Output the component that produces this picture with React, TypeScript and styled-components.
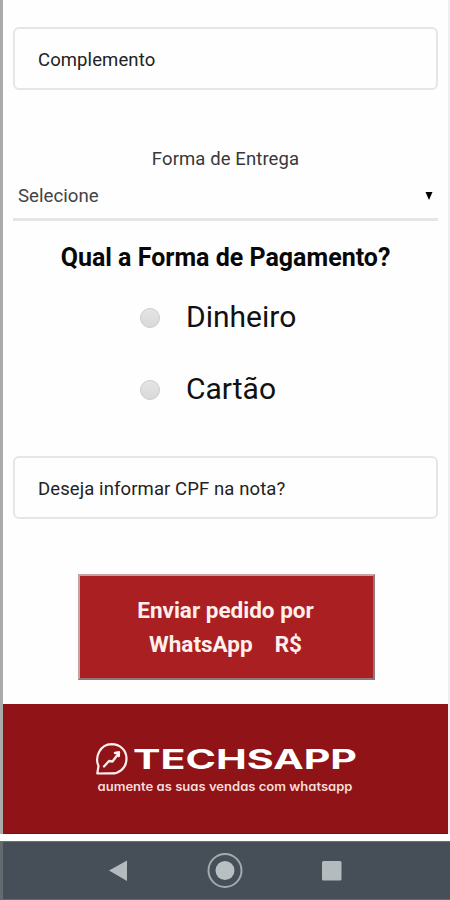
import React from "react";
import styled, { createGlobalStyle } from "styled-components";

const GlobalStyle = createGlobalStyle`
  * { box-sizing: border-box; }
  body { margin: 0; background: #fefefe; font-family: Roboto, "Liberation Sans", sans-serif; }
`;

const Screen = styled.div`
  width: 450px;
  height: 900px;
  display: flex;
  flex-direction: column;
  overflow: hidden;
`;

const Page = styled.main`
  height: 834px;
  display: flex;
  flex-direction: column;
  border-left: 3px solid #aaa;
  border-right: 2px solid #f0f0f0;
  background: #fefefe;
`;

const Form = styled.form`
  height: 704px;
  padding: 27px 10px 0;
  display: flex;
  flex-direction: column;
`;

const Field = styled.input`
  width: 425px;
  height: 63px;
  flex: none;
  padding: 2px 23px 0;
  border: 2px solid #e6e6e6;
  border-radius: 6px;
  background: #fefefe;
  font: 18.5px Roboto, sans-serif;
  letter-spacing: 0.1px;
  outline: none;
  &::placeholder { color: #222; opacity: 1; }
`;

const Label = styled.label`
  margin-top: 57px;
  height: 24px;
  text-align: center;
  font-size: 18.5px;
  line-height: 24px;
  letter-spacing: 0.1px;
  color: #383838;
`;

const Select = styled.div`
  width: 425px;
  height: 50px;
  display: flex;
  align-items: center;
  justify-content: space-between;
  padding: 2px 5px 0;
  border-bottom: 3px solid #e5e5e5;
  font-size: 18.7px;
  color: #444;
`;

const Heading = styled.h2`
  margin: 21px 0 0;
  height: 32px;
  font-size: 25px;
  line-height: 32px;
  font-weight: 700;
  text-align: center;
  color: #080808;
`;

const Options = styled.div`
  margin: 23px 0 0 127px;
  display: flex;
  flex-direction: column;
  gap: 32px;
`;

const Option = styled.label`
  height: 40px;
  display: flex;
  align-items: center;
  gap: 26px;
  font-size: 30px;
  line-height: 40px;
  color: #111;
`;

const Radio = styled.input`
  appearance: none;
  width: 20px;
  height: 20px;
  margin: 1px 0 0;
  border: 1px solid #ccc;
  border-radius: 50%;
  background: linear-gradient(#e4e4e4, #d9d9d9);
`;

const CpfField = styled(Field)`
  margin-top: 47px;
`;

const Submit = styled.button`
  width: 297px;
  height: 106px;
  margin: 55px 0 0 65px;
  padding: 0 2px 1px 0;
  border: 2px solid;
  border-color: #c9a09e #917777 #917777 #c9a09e;
  background: #aa2022;
  color: #fff0ee;
  font: 700 22.5px/34px Roboto, sans-serif;
  white-space: pre-line;
`;

const Amount = styled.span`
  margin-left: 22px;
`;

const Footer = styled.footer`
  height: 130px;
  display: flex;
  justify-content: center;
  background: #8f1317;
  border-bottom: 1px solid #7a1013;
`;

const Tagline = styled.text`
  fill: #f8dcda;
  font: 600 12.5px Inter, sans-serif;
  font-feature-settings: "cv11" 1;
`;

const NavBar = styled.nav`
  margin-top: 7px;
  height: 59px;
  display: flex;
  align-items: center;
  justify-content: center;
  border-top: 1px solid #697373;
  border-left: 3px solid #626b70;
  border-bottom: 1px solid #626b73;
  background: #464e57;
`;

function BrandLogo() {
  return (
    <svg width="445" height="129" viewBox="3 704 445 129">
      <g fill="none" stroke="#fff0ee" strokeLinejoin="round" strokeLinecap="round">
        <path strokeWidth="2.2" d="M98.500 766c-4-9 1.500-21.500 13-21.800c8.500 0 15 6 15 14.300c0 10-8 16-17 14.800L97.300 773.500z" />
        <path strokeWidth="2.300" d="m104 766.500 5-5.500 3.500.5 6-8m-3.500-.5 4-.8-.2 4" />
      </g>
      <text x="133" y="769" fill="#fff" fontFamily="Inter" fontWeight="700" fontSize="27" textLength="224" lengthAdjust="spacingAndGlyphs">TECHSAPP</text>
      <Tagline x="97.500" y="791" textLength="255" lengthAdjust="spacingAndGlyphs">aumente as suas vendas com whatsapp</Tagline>
    </svg>
  );
}

function NavIcons() {
  return (
    <svg width="447" height="57" viewBox="3 842 447 57">
      <path fill="#b3bbbe" d="M109 870.500 127 860.500v20.500z" />
      <circle cx="225" cy="870.500" r="16.500" fill="none" stroke="#a1abad" strokeWidth="2" />
      <circle cx="225" cy="870.500" r="9.500" fill="#b9c0c2" />
      <rect x="322" y="861" width="19.500" height="19.500" rx="1.500" fill="#b3bbbe" />
    </svg>
  );
}

export default function App() {
  return (
    <Screen>
      <GlobalStyle />
      <Page>
        <Form onSubmit={(e) => e.preventDefault()}>
          <Field placeholder="Complemento" />
          <Label>Forma de Entrega</Label>
          <Select>
            <span>Selecione</span>
            <svg width="8" height="9" viewBox="0 0 8 9"><path d="M.5 1h7L4 9z" fill="#000" /></svg>
          </Select>
          <Heading>Qual a Forma de Pagamento?</Heading>
          <Options>
            <Option><Radio type="radio" name="payment" />Dinheiro</Option>
            <Option><Radio type="radio" name="payment" />Cartão</Option>
          </Options>
          <CpfField placeholder="Deseja informar CPF na nota?" />
          <Submit type="button">
            Enviar pedido por<br />WhatsApp<Amount>R$</Amount>
          </Submit>
        </Form>
        <Footer><BrandLogo /></Footer>
      </Page>
      <NavBar><NavIcons /></NavBar>
    </Screen>
  );
}
